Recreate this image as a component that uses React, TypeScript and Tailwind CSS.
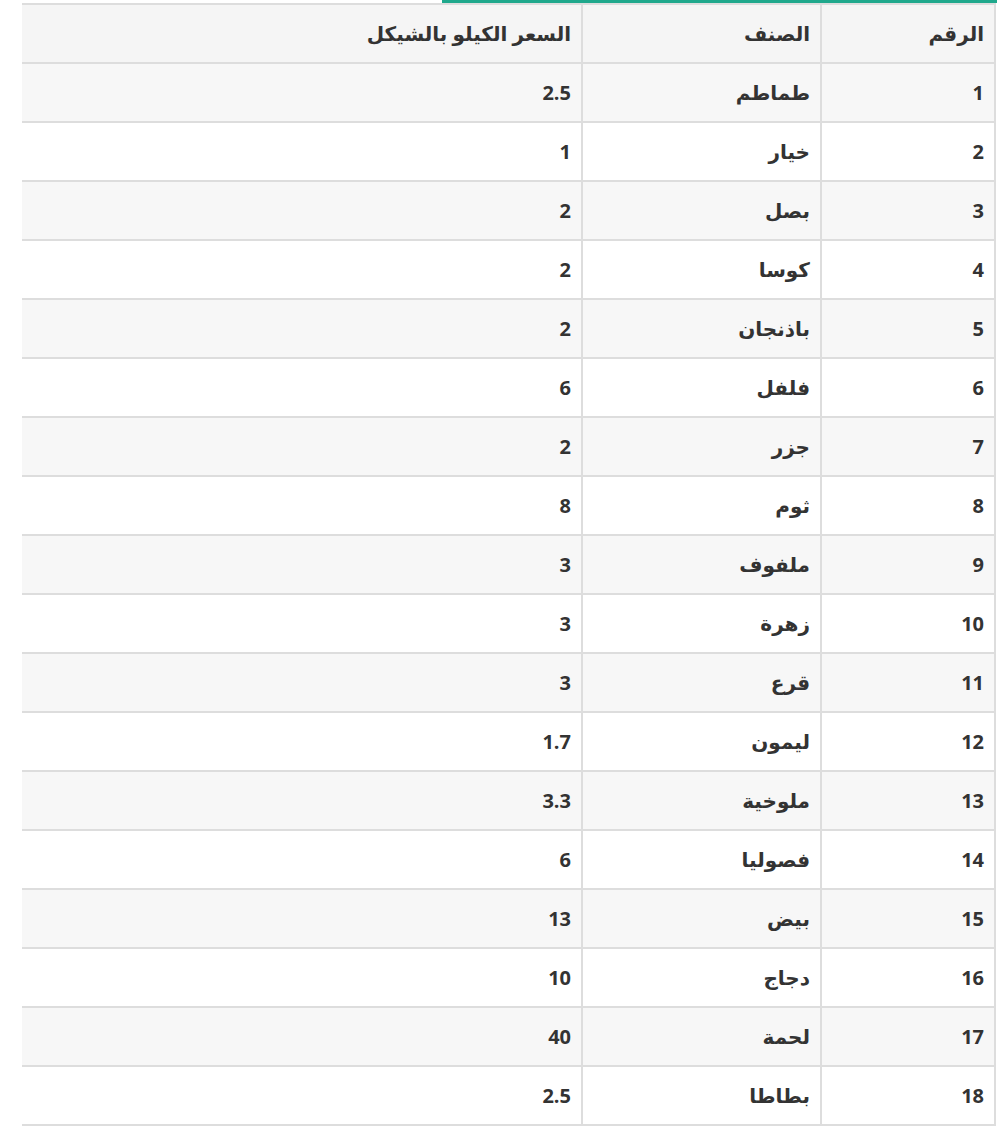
import React from 'react'

const rows: [number, string, string][] = [
  [1, 'طماطم', '2.5'],
  [2, 'خيار', '1'],
  [3, 'بصل', '2'],
  [4, 'كوسا', '2'],
  [5, 'باذنجان', '2'],
  [6, 'فلفل', '6'],
  [7, 'جزر', '2'],
  [8, 'ثوم', '8'],
  [9, 'ملفوف', '3'],
  [10, 'زهرة', '3'],
  [11, 'قرع', '3'],
  [12, 'ليمون', '1.7'],
  [13, 'ملوخية', '3.3'],
  [14, 'فصوليا', '6'],
  [15, 'بيض', '13'],
  [16, 'دجاج', '10'],
  [17, 'لحمة', '40'],
  [18, 'بطاطا', '2.5'],
]

const cell = 'border-2 border-[#dddddd] h-[59px] px-[10px] text-right align-middle'
// leftmost column has no outer left border in the screenshot
const lastCell = cell + ' border-l-0'

export default function App() {
  return (
    <div
      className="w-[1000px] h-[1142px] bg-white text-[#333333] font-bold text-[20px]"
      style={{ fontFamily: '"Open Sans", "DejaVu Sans", sans-serif' }}
    >
      <div className="h-[3px] ml-[442px] w-[555px] bg-[#1fa88c]" />
      <table dir="rtl" className="ml-[22px] w-[974px] border-collapse table-fixed">
        <colgroup>
          <col className="w-[174px]" />
          <col className="w-[239px]" />
          <col />
        </colgroup>
        <thead>
          <tr className="bg-[#f5f5f5]">
            <th className={cell}>الرقم</th>
            <th className={cell}>الصنف</th>
            <th className={lastCell}>السعر الكيلو بالشيكل</th>
          </tr>
        </thead>
        <tbody>
          {rows.map(([n, name, price]) => (
            <tr key={n} className={n % 2 === 1 ? 'bg-[#f7f7f7]' : 'bg-white'}>
              <td className={cell}>{n}</td>
              <td className={cell}>{name}</td>
              <td className={lastCell}>{price}</td>
            </tr>
          ))}
        </tbody>
      </table>
    </div>
  )
}
